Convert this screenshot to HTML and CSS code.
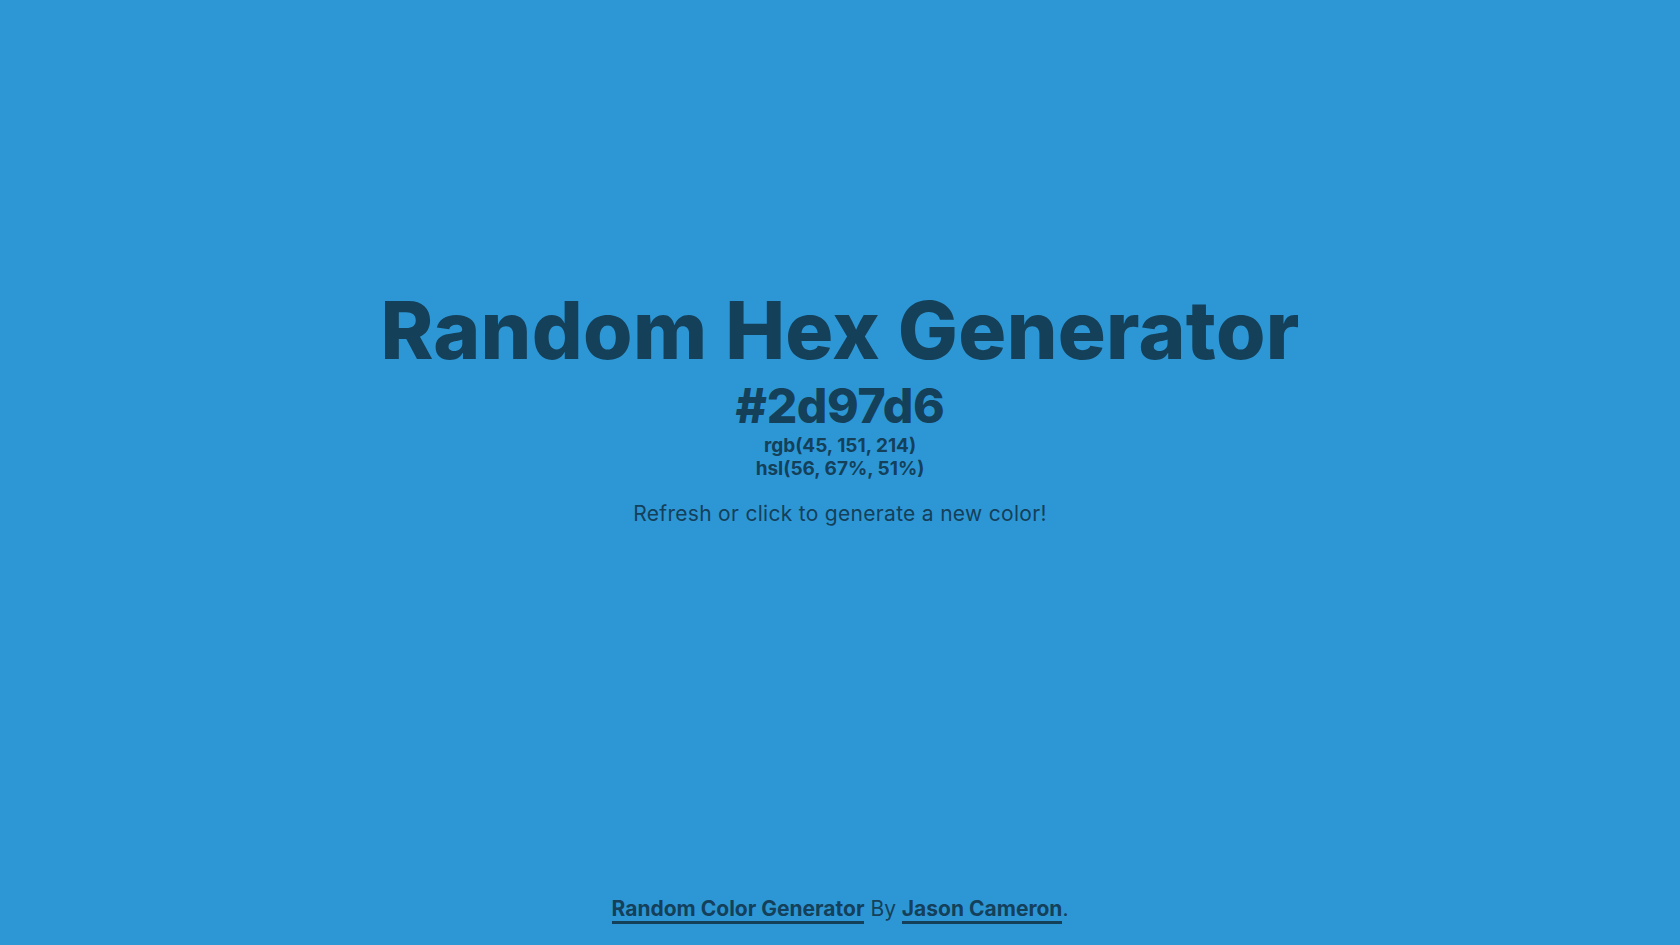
FILE: index.html
```html
<!DOCTYPE html>
<html lang="en">
<head>
<meta charset="utf-8">
<title>Random Hex Generator</title>
<link rel="stylesheet" href="styles.css">
</head>
<body class="page">
  <main class="main">
    <h1 class="title">Random Hex Generator</h1>
    <div class="hex">#2d97d6</div>
    <div class="code">rgb(45, 151, 214)</div>
    <div class="code">hsl(56, 67%, 51%)</div>
    <p class="hint">Refresh or click to generate a new color!</p>
  </main>
  <footer class="footer">
    <a class="link" href="#">Random Color Generator</a> By <a class="link" href="#">Jason Cameron</a>.
  </footer>
</body>
</html>
```
FILE: styles.css
```css
html, body {
  margin: 0;
  height: 100%;
}
.page {
  background: #2d97d6;
  color: #14405a;
  font-family: Inter, "Open Sans", sans-serif;
  display: flex;
  flex-direction: column;
  align-items: center;
  text-align: center;
}
.main {
  flex: 1;
  display: flex;
  flex-direction: column;
  align-items: center;
  padding-top: 290px;
}
.title {
  margin: 0;
  font-size: 80px;
  font-weight: 800;
  line-height: 80px;
  letter-spacing: 0.3px;
}
.hex {
  font-size: 48px;
  font-weight: 800;
  line-height: 56px;
  margin-top: 8px;
  letter-spacing: -0.4px;
}
.code {
  font-size: 19px;
  font-weight: 700;
  line-height: 23px;
}
.hint {
  margin: 20px 0 0;
  font-size: 21px;
  font-weight: 400;
  line-height: 28px;
  letter-spacing: 0.3px;
}
.footer {
  padding-bottom: 22px;
  font-size: 21px;
  line-height: 28px;
}
.link {
  color: inherit;
  font-weight: 700;
  text-decoration: none;
  border-bottom: 3px solid currentColor;
}
```
